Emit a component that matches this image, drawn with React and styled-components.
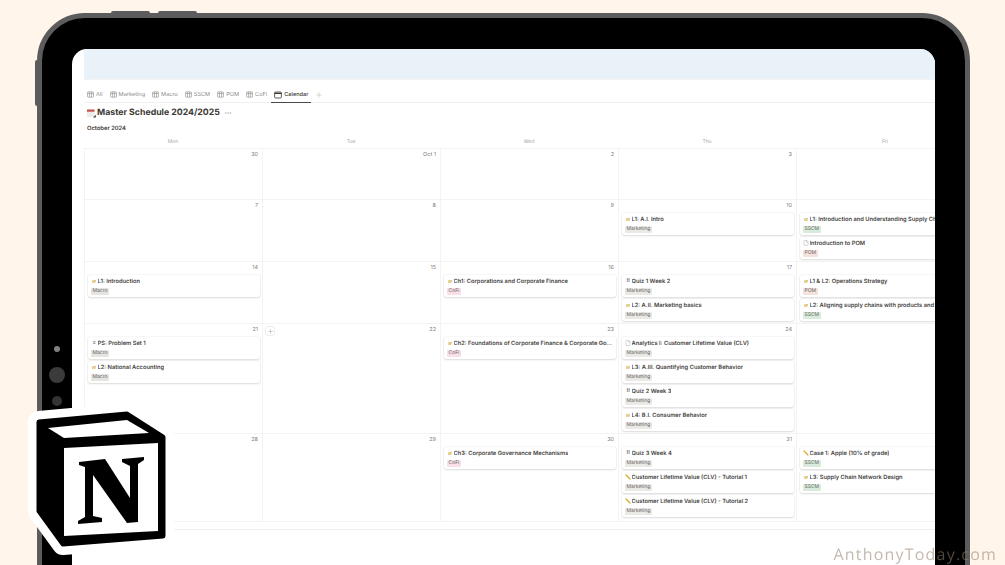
import React from 'react';
import styled, { createGlobalStyle } from 'styled-components';
import { Plus, File, Ellipsis } from 'lucide-react';

const GlobalStyle = createGlobalStyle`
  html, body {
    margin: 0;
    height: 565px;
    overflow: hidden;
    background: #fff5eb;
    font-family: Inter, "Liberation Sans", sans-serif;
    text-rendering: geometricPrecision;
  }
`;

const tabs = ['All', 'Marketing', 'Macro', 'SSCM', 'POM', 'CoFi'];
const weekdays = ['Mon', 'Tue', 'Wed', 'Thu', 'Fri'];

const card = (icon, title, tag) => ({ icon, title, tag });

// each week: row height and the five day cells
const weeks = [
  {
    height: 51,
    days: [{ date: '30' }, { date: 'Oct 1' }, { date: '2' }, { date: '3' }, { date: '' }],
  },
  {
    height: 62,
    days: [
      { date: '7' },
      { date: '8' },
      { date: '9' },
      { date: '10', cards: [card('note', 'L1: A.I. Intro', 'Marketing')] },
      {
        date: '',
        cards: [
          card('note', 'L1: Introduction and Understanding Supply Chain Management', 'SSCM'),
          card('doc', 'Introduction to POM', 'POM'),
        ],
      },
    ],
  },
  {
    height: 62,
    days: [
      { date: '14', cards: [card('note', 'L1: Introduction', 'Macro')] },
      { date: '15' },
      { date: '16', cards: [card('note', 'Ch1: Corporations and Corporate Finance', 'CoFi')] },
      {
        date: '17',
        cards: [
          card('quiz', 'Quiz 1 Week 2', 'Marketing'),
          card('note', 'L2: A.II. Marketing basics', 'Marketing'),
        ],
      },
      {
        date: '',
        cards: [
          card('note', 'L1 & L2: Operations Strategy', 'POM'),
          card('note', 'L2: Aligning supply chains with products and services', 'SSCM'),
        ],
      },
    ],
  },
  {
    height: 110,
    days: [
      {
        date: '21',
        cards: [
          card('set', 'PS: Problem Set 1', 'Macro'),
          card('note', 'L2: National Accounting', 'Macro'),
        ],
      },
      { date: '22', add: true },
      {
        date: '23',
        cards: [card('note', 'Ch2: Foundations of Corporate Finance & Corporate Governance', 'CoFi')],
      },
      {
        date: '24',
        cards: [
          card('doc', 'Analytics I: Customer Lifetime Value (CLV)', 'Marketing'),
          card('note', 'L3: A.III. Quantifying Customer Behavior', 'Marketing'),
          card('quiz', 'Quiz 2 Week 3', 'Marketing'),
          card('note', 'L4: B.I. Consumer Behavior', 'Marketing'),
        ],
      },
      { date: '' },
    ],
  },
  {
    height: 88,
    days: [
      { date: '28' },
      { date: '29' },
      { date: '30', cards: [card('note', 'Ch3: Corporate Governance Mechanisms', 'CoFi')] },
      {
        date: '31',
        cards: [
          card('quiz', 'Quiz 3 Week 4', 'Marketing'),
          card('pencil', 'Customer Lifetime Value (CLV) - Tutorial 1', 'Marketing'),
          card('pencil', 'Customer Lifetime Value (CLV) - Tutorial 2', 'Marketing'),
        ],
      },
      {
        date: '',
        cards: [
          card('pencil', 'Case 1: Apple (10% of grade)', 'SSCM'),
          card('note', 'L3: Supply Chain Network Design', 'SSCM'),
        ],
      },
    ],
  },
];

const tagColors = {
  Marketing: '#ebe9e6',
  Macro: '#e6e4e1',
  SSCM: '#d9ecdc',
  POM: '#f6e2dc',
  CoFi: '#f8dfe8',
};

function TableIcon() {
  return (
    <svg width="7" height="7" viewBox="0 0 8 7" fill="none" stroke="currentColor" strokeWidth="0.7">
      <rect x="0.5" y="0.5" width="7" height="6" rx="0.8" />
      <path d="M0.5 2.5 H7.5 M2.8 0.5 V6.5 M5.2 0.5 V6.5" />
    </svg>
  );
}

function CalendarIcon() {
  return (
    <svg width="8" height="8" viewBox="0 0 8 8" fill="none" stroke="currentColor" strokeWidth="0.8">
      <rect x="0.6" y="1" width="6.8" height="6" rx="1" />
      <path d="M0.6 2.4 H7.4" strokeWidth="1.1" />
    </svg>
  );
}

function CardIcon({ type }) {
  if (type === 'doc') {
    return <File size={6} color="#9a9a96" strokeWidth={1.5} />;
  }
  if (type === 'quiz') {
    return <Glyph>‼</Glyph>;
  }
  if (type === 'set') {
    return <Glyph>≡</Glyph>;
  }
  if (type === 'pencil') {
    return (
      <svg width="6" height="6" viewBox="0 0 6 6">
        <path d="M1 1 L5 5" stroke="#e0a92c" strokeWidth="1.2" strokeLinecap="round" />
      </svg>
    );
  }
  return (
    <svg width="6" height="6" viewBox="0 0 6 6">
      <rect x="1" y="2" width="3.6" height="3" fill="#ecd28c" />
      <path d="M3.4 3.6 L5 1.8" stroke="#a5a196" strokeWidth="0.6" />
    </svg>
  );
}

function NotionLogo() {
  const cube = 'M39 422 L127 414 L163 437 L163 536 L63 544 L39 511 Z';
  return (
    <LogoSvg viewBox="26 401 154 157" width="154" height="157">
      <path d={cube} fill="#fff" stroke="#fff" strokeWidth="22" strokeLinejoin="round" />
      <path d={cube} fill="#000" stroke="#000" strokeWidth="5" strokeLinejoin="round" />
      <path d="M48 428 L127 420 L149 433 L64 438 Z" fill="#fff" />
      <path d="M64 448 L158 443 L158 531 L64 536 Z" fill="#fff" />
      <path
        d="M79 462 L105 459 L130 498 L130 466 L122 462 L122 459 L144 457 L144 460 L138 464 L138 522 L127 523 L93 475 L93 516 L102 518 L102 522 L78 524 L78 521 L85 517 L85 467 L79 465 Z"
        fill="#000"
      />
    </LogoSvg>
  );
}

export default function App() {
  return (
    <Page>
      <GlobalStyle />
      <Device>
        <TopButton $left={69} />
        <TopButton $left={116} />
        <SideButton />
        <Lens $top={328} $size={6} $color="#808080" />
        <Lens $top={349} $size={16} $color="#3b3b3b" />
        <Lens $top={378} $size={10} $color="#333" />
        <Screen>
          <Banner />
          <Tabs>
            {tabs.map((tab) => (
              <Tab key={tab}>
                <TableIcon />
                {tab}
              </Tab>
            ))}
            <ActiveTab>
              <CalendarIcon />
              Calendar
            </ActiveTab>
            <AddTab>
              <Plus size={8} strokeWidth={1.2} />
            </AddTab>
          </Tabs>
          <TitleRow>
            <TitleIcon viewBox="0 0 9 9" width="9" height="9">
              <rect x="0" y="0.5" width="7.5" height="7.5" rx="0.8" fill="#eeeae6" />
              <rect x="0" y="0.5" width="7.5" height="2.2" fill="#c9504d" />
              <path d="M6 8.6 L8.8 5.8 L8.8 8.6 Z" fill="#3d3d3d" />
            </TitleIcon>
            <Title>Master Schedule 2024/2025</Title>
            <Ellipsis size={8} color="#9b9a97" strokeWidth={1.5} />
          </TitleRow>
          <Month>October 2024</Month>
          <WeekHeader>
            {weekdays.map((day) => (
              <Weekday key={day}>{day}</Weekday>
            ))}
          </WeekHeader>
          <Grid>
            {weeks.map((week) =>
              week.days.map((day, i) => (
                <Cell key={week.height + day.date + i} $height={week.height}>
                  {day.add && (
                    <AddButton>
                      <Plus size={7} strokeWidth={1.4} />
                    </AddButton>
                  )}
                  <DateLabel>{day.date || '\u00a0'}</DateLabel>
                  {(day.cards || []).map((c) => (
                    <Card key={c.title}>
                      <CardTitle>
                        <IconSlot>
                          <CardIcon type={c.icon} />
                        </IconSlot>
                        <CardText>{c.title}</CardText>
                      </CardTitle>
                      <Tag $color={tagColors[c.tag]}>{c.tag}</Tag>
                    </Card>
                  ))}
                </Cell>
              ))
            )}
          </Grid>
          <BottomRule />
        </Screen>
      </Device>
      <NotionLogo />
      <Watermark>AnthonyToday.com</Watermark>
    </Page>
  );
}

const Page = styled.div`
  position: relative;
  width: 1005px;
  height: 565px;
  overflow: hidden;
  padding: 13px 35px 0 37px;
  box-sizing: border-box;
  filter: blur(0.45px);
`;

const Device = styled.div`
  position: relative;
  width: 933px;
  height: 640px;
  box-sizing: border-box;
  padding: 31px 30px 0;
  background: #000;
  border: 5px solid #5c5c5c;
  border-radius: 48px;
`;

const TopButton = styled.div`
  position: absolute;
  top: -7px;
  left: ${(p) => p.$left}px;
  width: 39px;
  height: 2px;
  border-radius: 2px 2px 0 0;
  background: #5c5c5c;
`;

const SideButton = styled.div`
  position: absolute;
  top: 42px;
  left: -7px;
  width: 2px;
  height: 46px;
  border-radius: 2px 0 0 2px;
  background: #5c5c5c;
`;

const Lens = styled.div`
  position: absolute;
  top: ${(p) => p.$top}px;
  left: ${(p) => 15 - p.$size / 2}px;
  width: ${(p) => p.$size}px;
  height: ${(p) => p.$size}px;
  border-radius: 50%;
  background: ${(p) => p.$color};
`;

const Screen = styled.div`
  height: 600px;
  background: #fff;
  border-radius: 15px 15px 0 0;
  overflow: hidden;
  padding-left: 12px;
`;

const Banner = styled.div`
  height: 30px;
  background: #e8f2f8;
  margin-bottom: 3px;
  box-shadow: 0 1px 0 #f3f3f2;
`;

const Tabs = styled.div`
  display: flex;
  align-items: stretch;
  height: 21px;
  box-sizing: border-box;
  padding: 5px 0 0 3px;
  border-bottom: 1px solid #f0f0ef;
  gap: 7px;
`;

const Tab = styled.div`
  display: flex;
  align-items: center;
  gap: 2px;
  font-size: 5.6px;
  color: #8c8b88;
`;

const ActiveTab = styled(Tab)`
  color: #37352f;
  font-weight: 500;
  margin-left: -3px;
  padding: 0 3px;
  border-bottom: 1px solid #4a4a48;
  margin-bottom: -1px;
`;

const AddTab = styled(Tab)`
  margin-left: -3px;
  color: #a0a09c;
`;

const TitleRow = styled.div`
  display: flex;
  align-items: center;
  gap: 1px;
  height: 20px;
  padding-left: 3px;
`;

const TitleIcon = styled.svg`
  flex: none;
`;

const Title = styled.div`
  font-size: 8.75px;
  font-weight: 700;
  color: #3b3934;
  margin-right: 3px;
`;

const Month = styled.div`
  font-size: 5.8px;
  font-weight: 600;
  color: #3b3934;
  height: 13px;
  line-height: 12px;
  padding-left: 3px;
`;

const WeekHeader = styled.div`
  display: grid;
  grid-template-columns: repeat(5, 178px);
  height: 12px;
  box-sizing: border-box;
  padding-bottom: 1px;
  align-items: center;
`;

const Weekday = styled.div`
  text-align: center;
  font-size: 5px;
  color: #a8a7a4;
`;

const Grid = styled.div`
  display: grid;
  grid-template-columns: repeat(5, 178px);
  border-top: 1px solid #f3f3f1;
  border-left: 1px solid #f3f3f1;
`;

const Cell = styled.div`
  position: relative;
  box-sizing: border-box;
  height: ${(p) => p.$height}px;
  padding: 2px 1px 0 2px;
  border-right: 1px solid #f3f3f1;
  border-bottom: 1px solid #f3f3f1;
  display: flex;
  flex-direction: column;
  gap: 2px;
`;

const DateLabel = styled.div`
  text-align: right;
  font-size: 5.5px;
  line-height: 9px;
  height: 9px;
  padding-right: 3px;
  color: #7d7c78;
`;

const AddButton = styled.div`
  position: absolute;
  top: 3px;
  left: 3px;
  width: 8px;
  height: 8px;
  display: flex;
  align-items: center;
  justify-content: center;
  border-radius: 2px;
  color: #9b9a97;
  background: #fff;
  box-shadow: 0 0 2px rgba(15, 15, 15, 0.25);
`;

const Card = styled.div`
  box-sizing: border-box;
  height: 22px;
  margin: 0 1px;
  padding: 1.5px 3px;
  background: #fff;
  border-radius: 2px;
  box-shadow: 0 0 0 0.5px rgba(15, 15, 15, 0.06), 0 1px 2px rgba(15, 15, 15, 0.12);
`;

const CardTitle = styled.div`
  display: flex;
  align-items: center;
  height: 9px;
`;

const IconSlot = styled.span`
  flex: none;
  width: 6.5px;
  height: 7px;
  display: flex;
  align-items: center;
  justify-content: center;
`;

const Glyph = styled.span`
  font-size: 5px;
  font-weight: 700;
  line-height: 7px;
  color: #55534e;
`;

const CardText = styled.span`
  font-size: 5.75px;
  font-weight: 600;
  color: #45433e;
  white-space: nowrap;
  overflow: hidden;
  text-overflow: ellipsis;
`;

const Tag = styled.div`
  width: fit-content;
  margin: 2px 0 0 -0.5px;
  padding: 0 2px;
  height: 7px;
  line-height: 7px;
  border-radius: 1px;
  font-size: 5px;
  color: #66645f;
  background: ${(p) => p.$color};
`;

const BottomRule = styled.div`
  height: 1px;
  margin-top: 7px;
  background: #f0f0ef;
`;

const LogoSvg = styled.svg`
  position: absolute;
  left: 26px;
  top: 401px;
`;

const Watermark = styled.div`
  position: absolute;
  right: 8px;
  bottom: 2px;
  font-family: "Open Sans", sans-serif;
  font-size: 16px;
  line-height: 18px;
  letter-spacing: 1.2px;
  color: rgba(150, 125, 105, 0.55);
`;
